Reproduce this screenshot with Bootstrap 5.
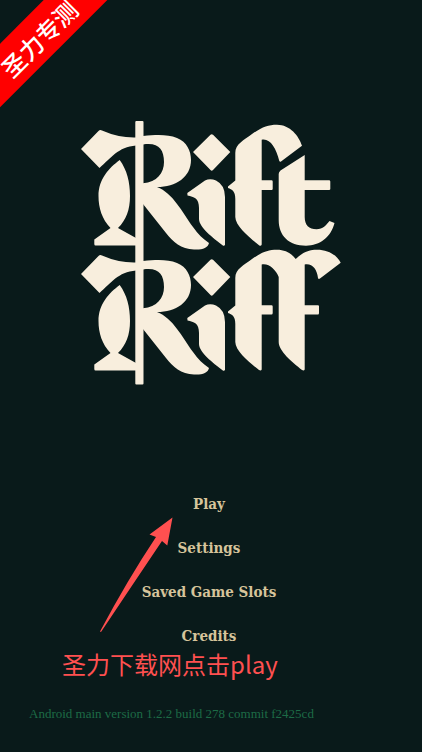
<!DOCTYPE html>
<html lang="en">
<head>
<meta charset="utf-8">
<meta name="viewport" content="width=device-width, initial-scale=1">
<title>Rift Riff</title>
<link href="https://cdn.jsdelivr.net/npm/bootstrap@5.3.0/dist/css/bootstrap.min.css" rel="stylesheet">
<style>
body { background: #091a1a; font-family: "DejaVu Serif", serif; }
.title-screen { padding-top: 116px; }
.game-logo { width: 280px; height: 276px; fill: #f8eedd; }
.game-menu { margin-top: 100px; gap: 20px; padding-right: 4px; }
.menu-item { color: #d6c49b; font-family: "DejaVu Serif Condensed", "DejaVu Serif", serif; font-size: 15px; line-height: 24px; font-weight: 700; }
.menu-item:hover { color: #f8eedd; }
.hint { color: #ff5050; font-family: "Noto Sans CJK SC", sans-serif; font-size: 24px; line-height: 32px; padding-left: 62px; }
.version { color: #1d6b46; font-family: "Liberation Serif", serif; font-size: 13px; line-height: 16px; padding: 26px 0 30px 29px; }
.ribbon { left: -42px; top: 15px; width: 160px; height: 45px; background: #ff0000; transform: rotate(-45deg); font-family: "Noto Sans CJK SC", sans-serif; font-size: 24px; line-height: 48px; font-weight: 500; }
.arrow { left: 100px; top: 517px; width: 73px; height: 115px; fill: #ff5050; pointer-events: none; }
</style>
<script src="https://cdn.jsdelivr.net/npm/bootstrap@5.3.0/dist/js/bootstrap.bundle.min.js" defer></script>
</head>
<body>
<main class="title-screen position-relative overflow-hidden min-vh-100 d-flex flex-column">
  <div class="ribbon position-absolute text-white text-center" lang="zh-CN">圣力专测</div>
  <h1 class="m-0 d-flex justify-content-center lh-1">
    <svg class="game-logo" viewBox="71 116 280 276" role="img" aria-label="Rift Riff">
      <defs>
        <g id="crest">
          <path d="M81 149L98.500 131Q100 129.500 102 130.500Q119 138 136 137.500V145.500C118 147 111 158 99.500 168Z"/>
          <path d="M119.700 160C127 170 130 182 130 196C130 210 126 220 118 228L136 238V245.500H95.500Q94.300 245.500 94.300 244V239.500L110.500 228C102 219 98.500 208 98.500 196C98.500 179 109 168 119.700 160Z"/>
          <path fill-rule="evenodd" d="M143 136C158 134.500 168 134.500 177 138C187 142 191 151 191 160C191 177 176 187 157 187C173 193 182 212 193 227C198 234 203 239 209 243C208 248 202 250 194 249.500C181 249 173 242 166 233L143 204ZM143 144.500V183.300C157 182 164 173 164 162C164 149 158 142 143 144.500Z"/>
          <path d="M210.500 134.800Q211.700 133.700 213 134.800L230.300 152L213 170Q211.700 171.300 210.500 170L193 152Z"/>
          <path d="M187.300 193L205 180.500Q210 178 216 180.500Q225 185 225 197V245Q224 246.500 222.500 245.200C213 238 199 227 199 219V208C199 198 194 197 187.500 195.500Z"/>
        </g>
      </defs>
      <rect x="135.300" y="121" width="8.200" height="263.500" rx="1"/>
      <use href="#crest"/>
      <use href="#crest" y="125"/>
      <path d="M235.300 153C235.300 144 244 140 252 134C262 127 268 124.700 277 124.700C290 124.700 299 136 302 145.700L281 161.500Q280 162.300 279.300 161C276 148 270 138 261.700 139.800V180.300H271.500Q272.700 180.300 272.700 181.500V189Q272.700 190 271.500 190H261.700V244.500Q261 246.500 259 245.200C250 238 235.300 226 235.300 217V199C235.300 191 232 189.500 228 188V186.500L235.300 180.500Z"/>
      <path d="M278.700 174Q278.700 172 280.500 170.500L304.700 155V180.300H329Q330.300 180.300 330.300 181.500V189Q330.300 190 329 190H304.700V217C304.700 225 309 229.300 316.500 229.300C323 229.300 326 225 329.500 221L334.500 223C331 237 320 245.700 306 245.700C289 245.700 278.700 236 278.700 220Z"/>
      <path d="M235.300 278C235.300 269 244 265 252 259C262 252 268 249.700 277 249.700C285 249.700 291 253 295.700 259C303 252 309 249.700 317 249.700C328 249.700 337 255 340.700 262.700L320 278.500Q318.500 279.500 318 278C317 269 312 263 304.700 264.500V305.300H318Q319 305.300 319 306.500V313Q319 314.500 318 314.500H304.700V369.500Q304 371 302 370C292 362 278.700 351 278.700 342V277C276 270 269 263 261.700 264.500V305.300H271.500Q272.700 305.300 272.700 306.500V313Q272.700 314.500 271.500 314.500H261.700V369.500Q261 371 259 370C250 363 235.300 351 235.300 342V324C235.300 316 232 314.500 228 313V311.500L235.300 305.500Z"/>
    </svg>
  </h1>
  <nav class="game-menu d-flex flex-column align-items-center" aria-label="Main menu">
    <button type="button" class="menu-item btn p-0 border-0">Play</button>
    <button type="button" class="menu-item btn p-0 border-0">Settings</button>
    <button type="button" class="menu-item btn p-0 border-0">Saved Game Slots</button>
    <button type="button" class="menu-item btn p-0 border-0">Credits</button>
  </nav>
  <svg class="arrow position-absolute" viewBox="100 517 73 115" aria-hidden="true"><path d="M172.500 517.500L149.500 534.500L156 537Q128 579 100 631.500L101 632Q131 587 162 541L167.300 545.500Z"/></svg>
  <p class="hint m-0" lang="zh-CN">圣力下载网点击play</p>
  <footer class="version">Android main version 1.2.2 build 278 commit f2425cd</footer>
</main>
</body>
</html>
